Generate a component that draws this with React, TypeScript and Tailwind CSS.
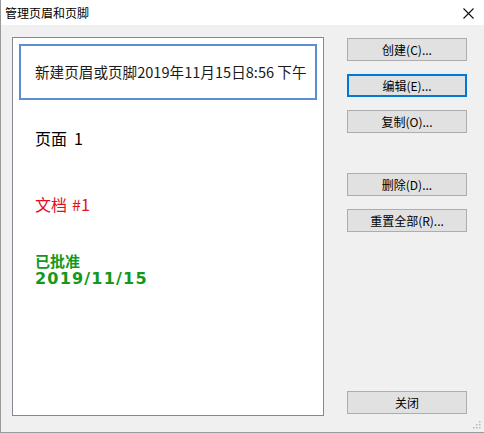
import React from "react";

const cjk = "font-['Microsoft_YaHei','Noto_Sans_CJK_SC',sans-serif]";

function Btn({ label, primary, className = "" }: { label: string; primary?: boolean; className?: string }) {
  return (
    <div
      className={`w-[120px] h-[23px] flex items-center justify-center bg-[#e1e1e1] text-[12px] leading-none text-black ${cjk} ${
        primary ? "border-2 border-[#0078d7]" : "border border-[#adadad]"
      } ${className}`}
    >
      {label}
    </div>
  );
}

function Item({ selected, children }: { selected?: boolean; children: React.ReactNode }) {
  return (
    <div className="h-[66px] px-[6px] py-[5px]">
      <div
        className={`h-full flex flex-col justify-center pl-[14px] border-2 ${
          selected ? "border-[#5b8fd2]" : "border-transparent"
        }`}
      >
        {children}
      </div>
    </div>
  );
}

export default function App() {
  return (
    <div className="w-[484px] h-[433px] bg-[#f0f0f0] border-l border-b border-[#9a9a9a] flex flex-col overflow-hidden relative">
      {/* Title bar */}
      <div className="h-[25px] bg-white flex items-center justify-between pl-[4px] pr-[10px]">
        <span className={`text-[12px] leading-none text-black ${cjk}`}>管理页眉和页脚</span>
        <svg width="11" height="11" viewBox="0 0 11 11" className="mt-[1px]">
          <path d="M0.5 0.5 L10.5 10.5 M10.5 0.5 L0.5 10.5" stroke="#111" strokeWidth="1.1" fill="none" />
        </svg>
      </div>
      {/* Body */}
      <div className="flex flex-row pl-[11px] pt-[12px]">
        <div className="w-[312px] h-[379px] bg-white border border-[#828790] pt-[1px] flex flex-col">
          <Item selected>
            <span className={`text-[14.6px] leading-[18px] text-[#1a1a1a] ${cjk}`}>
              新建页眉或页脚2019年11月15日8:56 下午
            </span>
          </Item>
          <Item>
            <span className="text-[16px] leading-[18px] text-black font-['Noto_Sans_CJK_SC',sans-serif]">
              页面<span className="ml-[7px]">1</span>
            </span>
          </Item>
          <Item>
            <span className="text-[16px] leading-[18px] text-[#e0101e] font-['Noto_Sans_CJK_SC',sans-serif]">
              文档<span className="ml-[5px]">#1</span>
            </span>
          </Item>
          <Item>
            <span className="text-[15px] leading-[17px] text-[#12991a] font-semibold font-['Noto_Sans_CJK_SC',sans-serif]">
              已批准
            </span>
            <span className="text-[16px] leading-[19px] text-[#12991a] font-bold font-['DejaVu_Sans',sans-serif] tracking-[1.2px]">
              2019/11/15
            </span>
          </Item>
        </div>
        <div className="ml-[23px] mt-[1px] h-[376px] flex flex-col">
          <Btn label="创建(C)..." />
          <Btn label="编辑(E)..." primary className="mt-[13px]" />
          <Btn label="复制(O)..." className="mt-[13px]" />
          <Btn label="删除(D)..." className="mt-[40px]" />
          <Btn label="重置全部(R)..." className="mt-[13px]" />
          <Btn label="关闭" className="mt-auto" />
        </div>
      </div>
      {/* size grip */}
      <svg width="8" height="8" viewBox="0 0 8 8" className="absolute right-[3px] bottom-[3px]">
        <rect x="6" y="0" width="1.5" height="1.5" fill="#b8b8b8" />
        <rect x="3" y="3" width="1.5" height="1.5" fill="#b8b8b8" />
        <rect x="6" y="3" width="1.5" height="1.5" fill="#b8b8b8" />
        <rect x="0" y="6" width="1.5" height="1.5" fill="#b8b8b8" />
        <rect x="3" y="6" width="1.5" height="1.5" fill="#b8b8b8" />
        <rect x="6" y="6" width="1.5" height="1.5" fill="#b8b8b8" />
      </svg>
    </div>
  );
}
